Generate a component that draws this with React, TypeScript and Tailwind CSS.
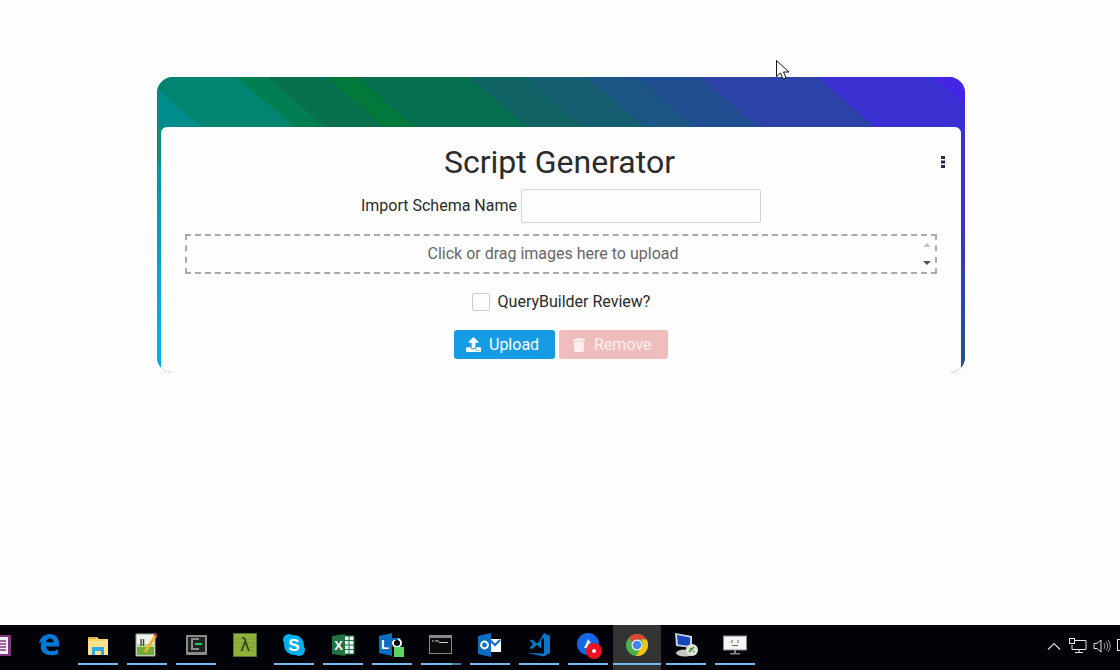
import { FaTrash, FaUpload } from "react-icons/fa";

const font = "font-['Roboto',sans-serif]";

function OneNoteIcon() {
  return (
    <svg width="24" height="24" viewBox="0 0 24 24">
      <rect x="3" y="2" width="20" height="21" rx="1" fill="#80397b" />
      <rect x="6" y="4" width="14" height="17" fill="#f4ecf4" />
      <path d="M8 8h10M8 11h10M8 14h10M8 17h10" stroke="#80397b" strokeWidth="1.4" />
    </svg>
  );
}

function EdgeIcon() {
  return (
    <svg width="22" height="24" viewBox="0 0 24 26">
      <path
        d="M1 11C2.500 5 7 1 13 1c6 0 10 4.500 10 11v2.500H9c0 3.500 2.500 5 6 5 3 0 5-.7 7-2v5c-2 1.200-4.500 1.800-7.500 1.800C7 24.300 3 20 3 15c0-2 .5-3.500 1.500-5C3 10.500 2 11 1 11zM9 10h8c0-2.500-1.500-4-4-4s-3.800 1.500-4 4z"
        fill="#0078d7"
        fillRule="evenodd"
      />
    </svg>
  );
}

function FolderIcon() {
  return (
    <svg width="24" height="24" viewBox="0 0 24 24">
      <path d="M2 4h9l2 2h9v16H2z" fill="#f6d573" />
      <path d="M2 4h8v2H2z" fill="#e8b23f" />
      <path d="M2 8h20v14H2z" fill="#fbe08f" />
      <path d="M6 14h12v8h-3v-4H9v4H6z" fill="#2fa9e8" />
    </svg>
  );
}

function NotepadIcon() {
  return (
    <svg width="24" height="26" viewBox="0 0 24 26">
      <path d="M1 2h19v22H1z" fill="#eef3ee" stroke="#9aa39a" />
      <path d="M2 15h17v8H2z" fill="#6cae36" />
      <path d="M2 12h17v3H2z" fill="#c9dd8f" />
      <path d="M6 7v7M8.500 7v7" stroke="#444" strokeWidth="1.5" />
      <path d="M10 20 21 3" stroke="#f0b429" strokeWidth="3" />
      <path d="M20 4l1.500-2.500" stroke="#a33" strokeWidth="3" />
    </svg>
  );
}

function TerminalAppIcon() {
  return (
    <svg width="24" height="24" viewBox="0 0 24 24">
      <rect x="2" y="2" width="21" height="20" rx="1" fill="#8b8d8b" />
      <rect x="4" y="4" width="17" height="15" fill="#1e2422" />
      <path d="M15 6H8v10h7" fill="none" stroke="#8b8d8b" strokeWidth="2" />
      <path d="M11 10h7v2h-7z" fill="#22c55e" />
    </svg>
  );
}

function LambdaIcon() {
  return (
    <svg width="24" height="24" viewBox="0 0 24 24">
      <rect x="0.5" y="0.5" width="23" height="23" fill="#8fb339" stroke="#55702a" />
      <path d="M2 6h20M2 10h20M2 14h20M2 18h20" stroke="#7d9f30" />
      <text x="12" y="18" textAnchor="middle" fontSize="17" fontFamily="'DejaVu Sans',sans-serif" fill="#2e3d12">
        λ
      </text>
    </svg>
  );
}

function SkypeIcon() {
  return (
    <svg width="24" height="24" viewBox="0 0 24 24">
      <circle cx="7" cy="7" r="6" fill="#00aff0" />
      <circle cx="17" cy="17" r="6" fill="#00aff0" />
      <circle cx="12" cy="12" r="10" fill="#00aff0" />
      <text x="12" y="18" textAnchor="middle" fontSize="17" fontWeight="700" fontFamily="'Liberation Sans',sans-serif" fill="#fff">
        S
      </text>
    </svg>
  );
}

function ExcelIcon() {
  return (
    <svg width="24" height="24" viewBox="0 0 24 24">
      <path d="M13 3h10v18H13z" fill="#e8f3ec" stroke="#1f7244" />
      <path d="M13 7.500h10M13 12h10M13 16.500h10M18 3v18" stroke="#1f7244" />
      <path d="M1 3l13-2v22L1 21z" fill="#1f7244" />
      <text x="7.500" y="17" textAnchor="middle" fontSize="13" fontWeight="700" fontFamily="'Liberation Sans',sans-serif" fill="#fff">
        X
      </text>
    </svg>
  );
}

function LyncIcon() {
  return (
    <svg width="26" height="26" viewBox="0 0 26 26">
      <path d="M0 4l13-3v23L0 21z" fill="#0a6fc2" />
      <text x="6" y="17" textAnchor="middle" fontSize="13" fontWeight="700" fontFamily="'Liberation Sans',sans-serif" fill="#fff">
        L
      </text>
      <circle cx="18" cy="11" r="4" fill="none" stroke="#fff" strokeWidth="2" />
      <path d="M13 6h6v2h-6z" fill="#0a6fc2" />
      <rect x="15" y="15" width="10" height="10" fill="#5fd35f" />
    </svg>
  );
}

function CmdIcon() {
  return (
    <svg width="24" height="20" viewBox="0 0 24 20">
      <rect x="0.500" y="0.500" width="22" height="18" fill="#0c0c0c" stroke="#8a8a8a" />
      <rect x="1" y="1" width="21" height="2" fill="#8a8a8a" />
      <path d="M3 6h2M6 6h4M10 7.500h9" stroke="#d4d4d4" strokeWidth="1.200" />
    </svg>
  );
}

function OutlookIcon() {
  return (
    <svg width="24" height="24" viewBox="0 0 24 24">
      <path d="M11 6h12v13H11z" fill="#fff" />
      <path d="M12 7l5 5 5-5" fill="none" stroke="#0a6fc2" strokeWidth="2" />
      <path d="M0 3l13-3v24L0 21z" fill="#0a6fc2" />
      <circle cx="6.500" cy="12" r="3.400" fill="none" stroke="#fff" strokeWidth="2" />
    </svg>
  );
}

function VsCodeIcon() {
  return (
    <svg width="26" height="26" viewBox="0 0 26 26">
      <path d="M18 1l6 3v17l-6 3.500L1 21l17 .500V5.500l-7 6-5-4-2.500 1L7 12l-3.500 4 2.500 1 5-4 4 3.500V8l-4 4 1-1z" fill="#0a76c8" />
    </svg>
  );
}

function BadgeAppIcon() {
  return (
    <svg width="26" height="26" viewBox="0 0 26 26" className="overflow-visible">
      <circle cx="13" cy="12" r="11" fill="#1167e8" />
      <path d="M9 16l4-9 3 4-3 1 3 3-4 1z" fill="#dfe9fb" />
      <circle cx="19" cy="19" r="8" fill="#ee1122" />
      <circle cx="19" cy="19" r="2" fill="#fff" />
    </svg>
  );
}

function ChromeIcon() {
  return (
    <svg width="24" height="24" viewBox="0 0 24 24">
      <circle cx="12" cy="12" r="11" fill="#4caf50" />
      <path d="M12 1a11 11 0 0 1 9.500 5.500H12a5.500 5.500 0 0 0-5 3L3.800 4.700A11 11 0 0 1 12 1z" fill="#db4437" />
      <path d="M21.500 6.500A11 11 0 0 1 11 23l5-8a5.500 5.500 0 0 0 0-8.500z" fill="#f4c20d" />
      <circle cx="12" cy="12" r="5.500" fill="#f1f1f1" />
      <circle cx="12" cy="12" r="4.300" fill="#4285f4" />
    </svg>
  );
}

function RemoteIcon() {
  return (
    <svg width="24" height="26" viewBox="0 0 24 26">
      <path d="M1 1l17 3v12L2 14z" fill="#c8d2e4" />
      <path d="M3 3l13 2.500V14L4 12.500z" fill="#1848b8" />
      <ellipse cx="11" cy="21" rx="9" ry="3.500" fill="#c6c6c6" />
      <circle cx="18" cy="18" r="6" fill="#dfe5d8" />
      <path d="M15 20l5-5M16 16l1 1M19 19l1 1" stroke="#3d8a36" strokeWidth="1.500" />
    </svg>
  );
}

function MonitorIcon() {
  return (
    <svg width="24" height="24" viewBox="0 0 24 24">
      <rect x="0.500" y="3" width="23" height="14" fill="#f4f4f4" stroke="#8a8a8a" />
      <path d="M9 7v3M15 7v3M9 12.500h6" stroke="#666" />
      <path d="M11 17h2v3h-2zM7 20h10v1.500H7z" fill="#8a8a8a" />
    </svg>
  );
}

function ArrowCursor() {
  return (
    <svg width="14" height="21" viewBox="0 0 14 21">
      <path d="M0.500 0.500v16l4-3.500 2.500 6 3-1.300-2.500-5.700h5.500z" fill="#fdfdfd" stroke="#111" />
    </svg>
  );
}

function KebabIcon() {
  return (
    <svg width="4" height="12" viewBox="0 0 4 12">
      <path d="M0 0h4v3H0zM0 4.500h4v3H0zM0 9h4v3H0z" fill="#1f2a44" />
    </svg>
  );
}

const apps = [
  { name: "onenote", icon: <OneNoteIcon />, running: false },
  { name: "edge", icon: <EdgeIcon />, running: false },
  { name: "explorer", icon: <FolderIcon />, running: true },
  { name: "notepad", icon: <NotepadIcon />, running: true },
  { name: "terminal", icon: <TerminalAppIcon />, running: true },
  { name: "lambda", icon: <LambdaIcon />, running: false },
  { name: "skype", icon: <SkypeIcon />, running: true },
  { name: "excel", icon: <ExcelIcon />, running: true },
  { name: "lync", icon: <LyncIcon />, running: true },
  { name: "cmd", icon: <CmdIcon />, running: true },
  { name: "outlook", icon: <OutlookIcon />, running: true },
  { name: "vscode", icon: <VsCodeIcon />, running: true },
  { name: "badge", icon: <BadgeAppIcon />, running: true },
];

const trailingApps = [
  { name: "remote", icon: <RemoteIcon /> },
  { name: "monitor", icon: <MonitorIcon /> },
];

function Taskbar() {
  return (
    <div className="flex h-[45px] items-stretch justify-between overflow-hidden bg-[#020308]">
      <div className="-ml-[25px] flex">
        {apps.map((app) => (
          <div key={app.name} className="flex w-[49px] flex-col pl-[5px]">
            <div className="flex h-[38px] w-10 items-center justify-center pt-[2px]">{app.icon}</div>
            {app.running &&
              (app.name === "cmd" ? (
                <div className="h-[2px] w-10 bg-[linear-gradient(to_right,#76b9ed_31px,#3f7ca8_31px)]" />
              ) : (
                <div className="h-[2px] w-10 bg-[#76b9ed]" />
              ))}
          </div>
        ))}
        <div className="ml-[1px] flex w-[48px] flex-col bg-[#333333]">
          <div className="flex h-[38px] items-center justify-center pt-[2px]">
            <ChromeIcon />
          </div>
          <div className="h-[2px] bg-[#76b9ed]" />
        </div>
        {trailingApps.map((app) => (
          <div key={app.name} className="flex w-[49px] flex-col pl-[5px]">
            <div className="flex h-[38px] w-10 items-center justify-center pt-[2px]">{app.icon}</div>
            <div className="h-[2px] w-10 bg-[#76b9ed]" />
          </div>
        ))}
      </div>
      <div className="-mr-[11px] flex items-center gap-[6px] pb-[4px]">
        <svg width="14" height="8" viewBox="0 0 14 8" className="mr-[2px]">
          <path d="M1 7.500l6-6 6 6" fill="none" stroke="#d8d8d8" strokeWidth="1.200" />
        </svg>
        <svg width="18" height="16" viewBox="0 0 18 16">
          <path d="M5 2.500h12v9H3V7M10 11.500v3M6 14.500h8" fill="none" stroke="#e8e8e8" />
          <rect x="0.500" y="0.500" width="5" height="5" fill="#020308" stroke="#e8e8e8" />
        </svg>
        <svg width="18" height="16" viewBox="0 0 18 16">
          <path d="M1 5.500h3L8 2v12l-4-3.500H1z" fill="none" stroke="#e8e8e8" />
          <path d="M11 5q2 3 0 6M13 3.500q3.500 4.500 0 9M15 2q4.500 6 0 12" fill="none" stroke="#9a9a9a" />
        </svg>
        <div className="mb-[1px] h-[12px] w-[14px] border border-[#e8e8e8]" />
      </div>
    </div>
  );
}

export default function App() {
  return (
    <div className={`flex h-[670px] w-[1120px] flex-col overflow-hidden bg-[#fdfdfd] ${font}`}>
      <div className="relative flex-1 pt-[77px] pl-[157px]">
        <div className="absolute top-[60px] left-[776px]">
          <ArrowCursor />
        </div>

        <div className="flex h-[296px] w-[808px] flex-col overflow-hidden rounded-[16px] bg-[linear-gradient(to_right,#059080_50%,#3b30d2_50%)]">
          <div className="h-[50px] bg-[linear-gradient(41deg,#008c8a_29px,#018470_29px,#018470_90px,#027f52_90px,#027f52_110px,#08704f_110px,#08704f_149px,#02783b_149px,#02783b_169px,#066f50_169px,#066f50_243px,#126366_243px,#126366_280px,#175e72_280px,#175e72_320px,#1b5584_320px,#1b5584_353px,#204d90_353px,#204d90_394px,#2b42a6_394px,#2b42a6_471px,#3a30d2_471px,#3a30d2_547px,#4425e8_547px)]" />
          <div className="flex flex-1">
            <div className="w-1 bg-[linear-gradient(to_bottom,#059080_0px,#059080_36px,#0096a2_36px,#00aef0_85%)]" />
            <div className="flex-1 rounded-t-[6px] bg-[#fdfdfd] px-6">
              <div className="relative flex h-[62px] items-start justify-center pt-[16px] pr-[3px]">
                <h1 className="text-[32px] leading-[38px] font-normal text-[#292b2c]">Script Generator</h1>
                <div className="absolute top-[29px] right-[-8px] flex">
                  <KebabIcon />
                </div>
              </div>
              <div className="flex items-center justify-center gap-1">
                <label className="text-[16px] text-[#292b2c]">Import Schema Name</label>
                <input className="h-[34px] w-[240px] rounded-[2px] border border-[#d4d4d4] bg-[#fdfdfd]" />
              </div>
              <div className="relative mt-[11px] flex h-10 items-center justify-center border-2 border-dashed border-[#aaaaaa] pr-[16px] text-[16px] text-[#666666]">
                Click or drag images here to upload
                <div className="absolute top-[7px] right-[4px] flex flex-col gap-[14px]">
                  <span className="h-0 w-0 border-x-[4px] border-b-[4px] border-x-transparent border-b-[#c4c4c4]" />
                  <span className="h-0 w-0 border-x-[4px] border-t-[4px] border-x-transparent border-t-[#505050]" />
                </div>
              </div>
              <div className="mt-[19px] flex items-center justify-center gap-2">
                <span className="h-[18px] w-[18px] rounded-[2px] border border-[#cccccc]" />
                <span className="text-[16px] leading-[18px] text-[#292b2c]">QueryBuilder Review?</span>
              </div>
              <div className="mt-[19px] flex justify-center gap-1">
                <button className="flex h-[29px] w-[101px] items-center gap-2 rounded-[3px] bg-[#169be5] pl-3 text-[16px] text-white">
                  <FaUpload size={15} />
                  Upload
                </button>
                <button className="flex h-[29px] w-[109px] items-center gap-2 rounded-[3px] bg-[#efbebc] pl-[13px] text-[16px] text-[#fdf0ef]">
                  <FaTrash size={14} />
                  Remove
                </button>
              </div>
            </div>
            <div className="w-1 bg-[linear-gradient(to_bottom,#3b30d2,#3b30d2_40%,#1b5a80)]" />
          </div>
        </div>
      </div>
      <Taskbar />
    </div>
  );
}
